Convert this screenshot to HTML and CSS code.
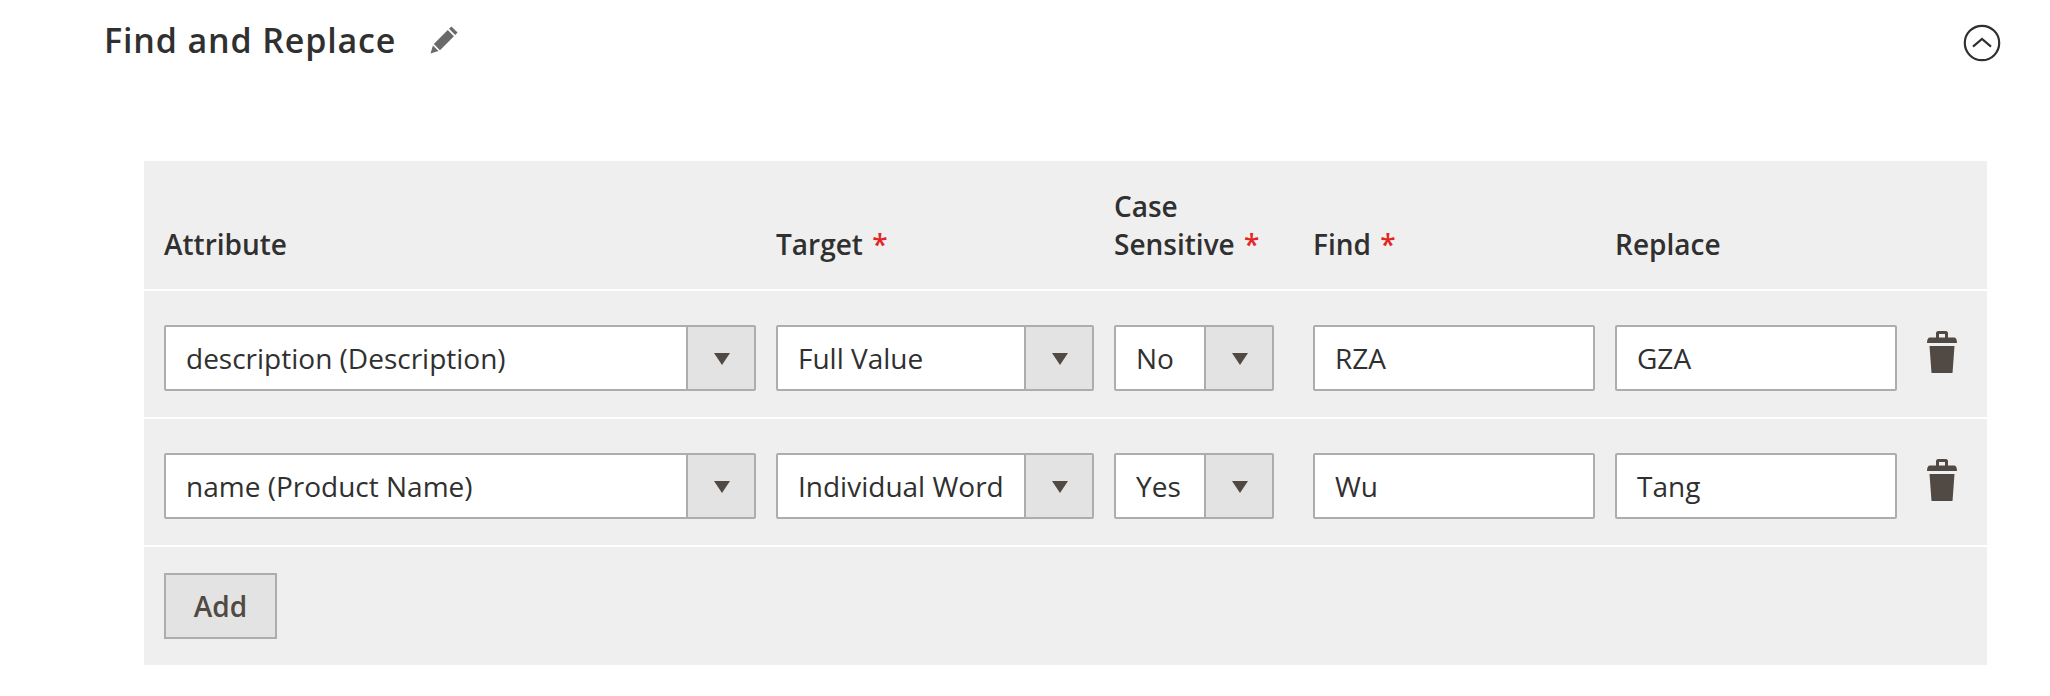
FILE: index.html
```html
<!DOCTYPE html>
<html lang="en">
<head>
<meta charset="utf-8">
<title>Find and Replace</title>
<link rel="stylesheet" href="styles.css">
</head>
<body>
<header class="section-head">
  <h2 class="title">Find and Replace</h2>
  <svg class="pencil" viewBox="0 0 32 32"><path d="M23.6 1.6l6.8 6.8-2.6 2.6-6.8-6.8zM19.6 5.6l6.8 6.8L11 27.8 4.2 21zM3.2 22.6l6.2 6.2L.6 31.4z"/></svg>
  <svg class="collapse" viewBox="0 0 38 38"><circle cx="19" cy="19" r="17.2"/><path d="M10 22.6l9-7.6 9 7.6"/></svg>
</header>
<section class="panel">
  <div class="row row-head">
    <div class="th">Attribute</div>
    <div class="th">Target <span class="req">*</span></div>
    <div class="th">Case<br>Sensitive <span class="req">*</span></div>
    <div class="th">Find <span class="req">*</span></div>
    <div class="th">Replace</div>
  </div>
  <div class="row">
    <div class="select"><span class="value">description (Description)</span><span class="caret"><i></i></span></div>
    <div class="select"><span class="value">Full Value</span><span class="caret"><i></i></span></div>
    <div class="select narrow"><span class="value">No</span><span class="caret"><i></i></span></div>
    <div class="input">RZA</div>
    <div class="input">GZA</div>
    <svg class="trash" viewBox="0 0 30 42"><path d="M9 6.500V2c0-1 1-2 2-2h8c1 0 2 1 2 2v4.500h6c2 0 3 2 3 5.500H0c0-3.500 1-5.500 3-5.500zM12 6.500h6V3h-6zM2.500 15h25l-2 27h-21z"/></svg>
  </div>
  <div class="row">
    <div class="select"><span class="value">name (Product Name)</span><span class="caret"><i></i></span></div>
    <div class="select"><span class="value">Individual Word</span><span class="caret"><i></i></span></div>
    <div class="select narrow"><span class="value">Yes</span><span class="caret"><i></i></span></div>
    <div class="input">Wu</div>
    <div class="input">Tang</div>
    <svg class="trash" viewBox="0 0 30 42"><path d="M9 6.500V2c0-1 1-2 2-2h8c1 0 2 1 2 2v4.500h6c2 0 3 2 3 5.500H0c0-3.500 1-5.500 3-5.500zM12 6.500h6V3h-6zM2.500 15h25l-2 27h-21z"/></svg>
  </div>
  <div class="row-foot">
    <button class="add" type="button">Add</button>
  </div>
</section>
</body>
</html>
```
FILE: styles.css
```css
* { box-sizing: border-box; }
html, body { margin: 0; padding: 0; background: #fff; }
body {
  width: 2050px;
  height: 696px;
  overflow: hidden;
  font-family: "Open Sans", sans-serif;
  color: #303030;
}
.section-head {
  display: flex;
  align-items: center;
  height: 82px;
  padding: 0 0 0 104px;
  margin-bottom: 79px;
}
.title {
  margin: 0 0 2px;
  font-size: 34px;
  font-weight: 600;
  line-height: 46px;
  letter-spacing: 0.85px;
}
.pencil {
  width: 29px;
  height: 29px;
  margin-left: 34px;
  margin-top: -3px;
  fill: #6a6a6a;
}
.collapse {
  width: 38px;
  height: 38px;
  margin-left: auto;
  margin-right: 49px;
  margin-top: 3px;
  fill: none;
  stroke: #303030;
  stroke-width: 2.2;
}
.panel {
  width: 1843px;
  margin-left: 144px;
  background: #efefef;
}
.row {
  display: grid;
  grid-template-columns: 592px 318px 179px 282px 282px 30px;
  column-gap: 20px;
  align-items: start;
  height: 128px;
  padding: 34px 0 0 20px;
  border-bottom: 2px solid #fff;
}
.row-head {
  height: 130px;
  padding-top: 0;
  align-items: end;
  padding-bottom: 26px;
}
.th {
  font-size: 28px;
  font-weight: 600;
  line-height: 38px;
  white-space: nowrap;
}
.req {
  color: #e22626;
  margin-left: 2px;
}
.select, .input {
  height: 66px;
  border: 2px solid #adadad;
  border-radius: 2px;
  background: #fff;
  font-size: 28px;
  line-height: 63px;
}
.select {
  display: flex;
  overflow: hidden;
}
.narrow {
  width: 160px;
}
.value {
  flex: 1;
  padding-left: 20px;
  white-space: nowrap;
}
.input {
  padding-left: 20px;
}
.caret {
  flex: 0 0 68px;
  display: flex;
  align-items: center;
  justify-content: center;
  background: #e3e3e3;
  border-left: 2px solid #adadad;
}
.caret i {
  width: 0;
  height: 0;
  border-style: solid;
  border-width: 12px 8.500px 0;
  border-color: #514943 transparent transparent;
  margin-left: 1px;
  margin-top: 2px;
}
.trash {
  width: 30px;
  height: 42px;
  margin-top: 6px;
  margin-left: 10px;
  fill: #514943;
  overflow: visible;
}
.row-foot {
  height: 118px;
  padding: 26px 0 0 20px;
}
.add {
  display: block;
  width: 113px;
  height: 66px;
  padding: 0;
  border: 2px solid #adadad;
  border-radius: 0;
  background: #e3e3e3;
  color: #514943;
  font-family: inherit;
  font-size: 28px;
  font-weight: 600;
}
```
